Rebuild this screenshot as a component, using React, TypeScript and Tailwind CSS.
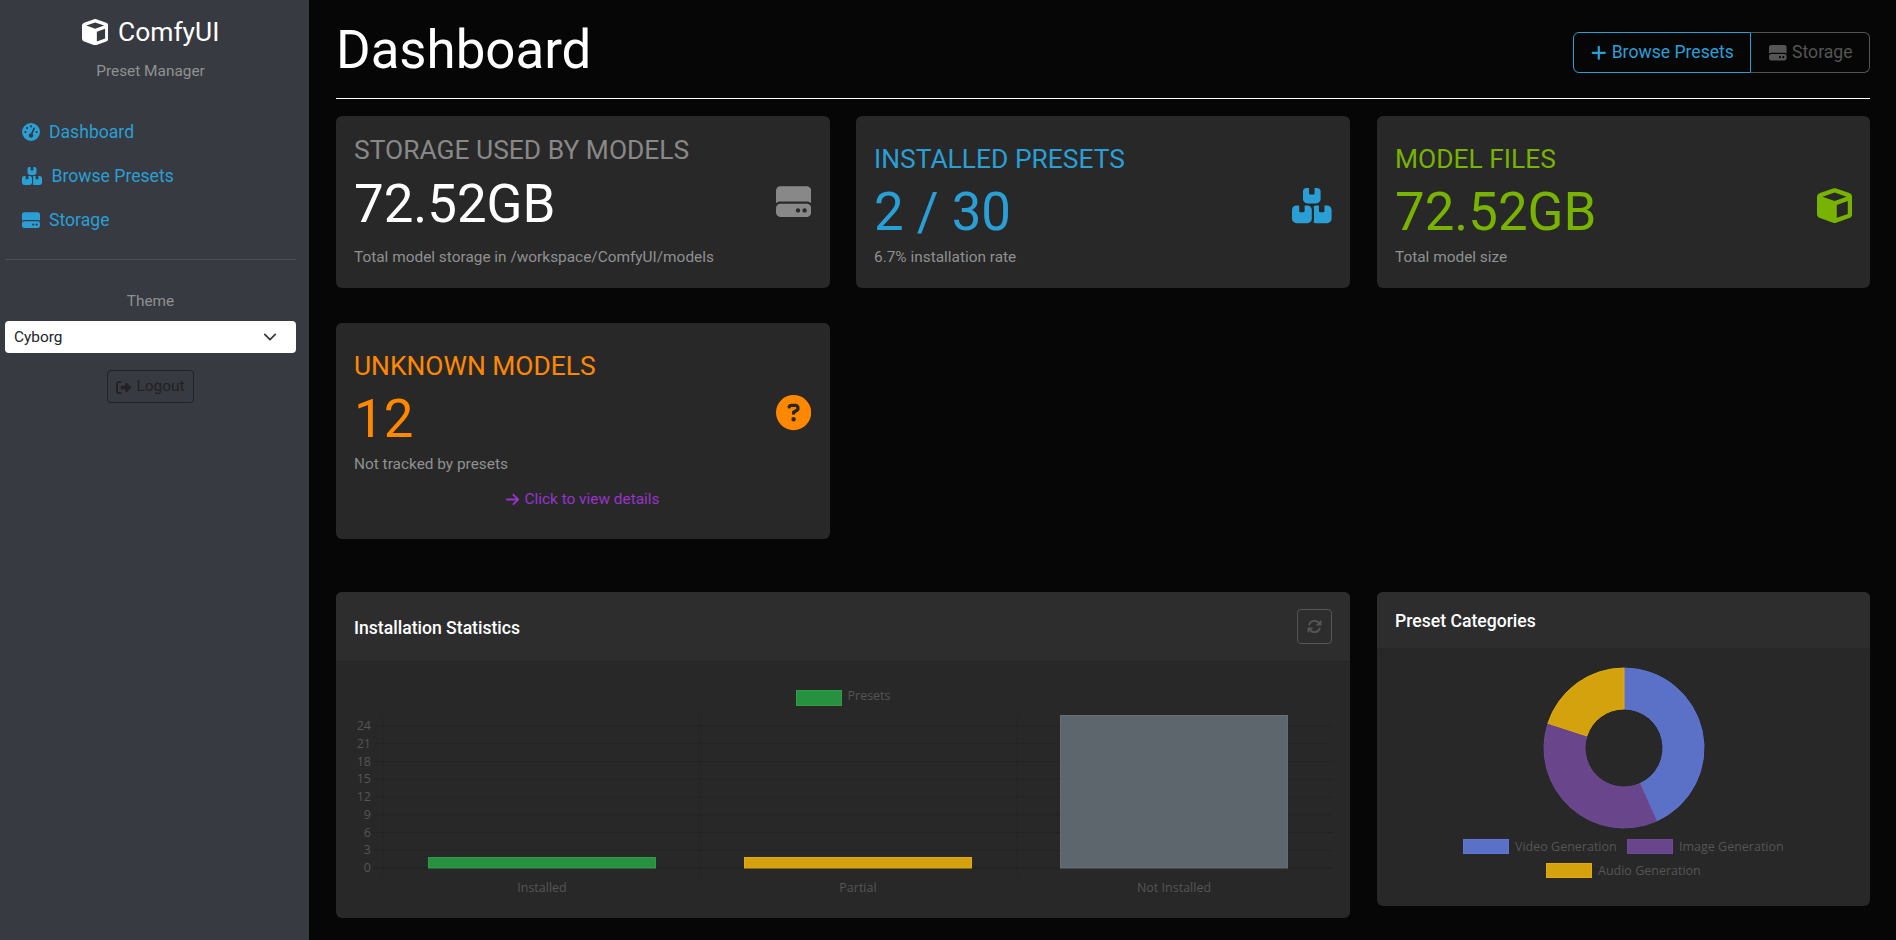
import type { ReactNode } from 'react';
import {
  FaArrowRight,
  FaArrowsRotate,
  FaBoxesStacked,
  FaCircleQuestion,
  FaCube,
  FaGaugeHigh,
  FaHardDrive,
  FaPlus,
  FaRightFromBracket,
} from 'react-icons/fa6';

const chartFont = { fontFamily: '"Open Sans", sans-serif' };

function Sidebar() {
  return (
    <aside className="w-[309px] shrink-0 bg-[#373a40] pl-[5px] pr-[13px] min-h-screen">
      <div className="flex items-center justify-center gap-[10px] pt-[16px] h-[48px] text-white">
        <FaCube className="text-[26.4px]" />
        <span className="text-[26.4px] leading-none">ComfyUI</span>
      </div>
      <p className="mt-[14px] text-center text-[15.4px] leading-[18px] text-[#8f9192]">Preset Manager</p>
      <nav className="mt-[40px] pl-[17px] flex flex-col gap-[20px] text-[#2a9fd6] text-[17.6px] leading-[24px]">
        <a className="flex items-center gap-[9px]">
          <FaGaugeHigh className="text-[18px]" />
          Dashboard
        </a>
        <a className="flex items-center gap-[9.5px]">
          <FaBoxesStacked className="w-[20px] h-[18px]" />
          Browse Presets
        </a>
        <a className="flex items-center gap-[9px]">
          <FaHardDrive className="text-[18px]" />
          Storage
        </a>
      </nav>
      <hr className="mt-[27px] border-[#4b4e54]" />
      <p className="mt-[32px] text-center text-[15.4px] leading-[18px] text-[#8f9192]">Theme</p>
      <div className="mt-[11px] h-[32px] bg-white rounded-[4px] flex items-center justify-between pl-[9px] pr-[19px] text-[15.4px] text-[#212529]">
        <span className="mt-[1px]">Cyborg</span>
        <svg viewBox="0 0 16 16" className="w-[14px] h-[14px]" fill="none" stroke="#343a40" strokeWidth="2" strokeLinecap="round" strokeLinejoin="round">
          <path d="m2 5 6 6 6-6" />
        </svg>
      </div>
      <div className="mt-[17px] flex justify-center">
        <button className="w-[87px] h-[33px] pt-[1px] rounded-[4px] border border-[#222] text-[#222] text-[15.4px] flex items-center justify-center gap-[5px]">
          <FaRightFromBracket className="text-[15px]" />
          Logout
        </button>
      </div>
    </aside>
  );
}

type StatProps = {
  title: string;
  value: string;
  note: string;
  icon: ReactNode;
  tone: string;
  valueTone: string;
  compact?: boolean;
  className?: string;
  children?: ReactNode;
};

function StatCard({ title, value, note, icon, tone, valueTone, compact, className, children }: StatProps) {
  return (
    <div className={`bg-[#282828] rounded-[6px] pl-[18px] ${compact ? 'pt-[18px]' : 'pt-[27px]'} ${className ?? 'pr-[19px]'}`}>
      <div className="flex items-center justify-between">
        <div>
          <h3 className={`text-[26.4px] leading-[32px] ${tone}`}>{title}</h3>
          <div className={`${compact ? 'mt-[7px]' : 'mt-[6px]'} text-[52.8px] leading-[63px] ${valueTone}`}>{value}</div>
          <p className={`${compact ? 'mt-[10px]' : 'mt-[2px]'} text-[15.4px] leading-[23px] text-[#8f9192]`}>{note}</p>
        </div>
        {icon}
      </div>
      {children}
    </div>
  );
}

function BarChart() {
  const ticks = [24, 21, 18, 15, 12, 9, 6, 3, 0];
  return (
    <svg viewBox="336 662 1014 256" className="block w-[1014px] h-[256px]" style={chartFont}>
      <rect x="796.5" y="690.5" width="45" height="15" fill="#28913f" stroke="#2f9e47" />
      <text x="847.5" y="700" fontSize="12.5" fill="#555">Presets</text>
      {ticks.map((t, i) => {
        const y = 726 + i * 17.75;
        return (
          <g key={t}>
            <line x1="374" x2="1332" y1={y} y2={y} stroke={t === 0 ? '#1f1f1f' : '#232323'} />
            <text x="371" y={y + 4} fontSize="12.5" fill="#555" textAnchor="end">{t}</text>
          </g>
        );
      })}
      {[383, 700, 1017].map((x) => (
        <line key={x} x1={x} x2={x} y1="715" y2="877" stroke="#242424" />
      ))}
      <rect x="428.5" y="857.5" width="227" height="10.5" fill="#28913f" stroke="#2f9e47" />
      <rect x="744.5" y="857.5" width="227" height="10.5" fill="#d4a20d" stroke="#e0ab0e" />
      <rect x="1060.5" y="715.5" width="227" height="152.5" fill="#5e666d" stroke="#666e75" />
      <text x="542" y="892" fontSize="12.5" fill="#555" textAnchor="middle">Installed</text>
      <text x="858" y="892" fontSize="12.5" fill="#555" textAnchor="middle">Partial</text>
      <text x="1174" y="892" fontSize="12.5" fill="#555" textAnchor="middle">Not Installed</text>
    </svg>
  );
}

// polar to cartesian for the doughnut, 0deg at the top
function pt(r: number, deg: number) {
  const a = (deg * Math.PI) / 180;
  return `${(1624 + r * Math.sin(a)).toFixed(2)} ${(748 - r * Math.cos(a)).toFixed(2)}`;
}

function slice(from: number, to: number) {
  const big = to - from > 180 ? 1 : 0;
  return `M${pt(80, from)} A80 80 0 ${big} 1 ${pt(80, to)} L${pt(39, to)} A39 39 0 ${big} 0 ${pt(39, from)} Z`;
}

function DoughnutChart() {
  return (
    <svg viewBox="1377 649 493 257" className="block w-[493px] h-[257px]" style={chartFont}>
      <path d={slice(0, 156)} fill="#5b70c7" stroke="#5f75d0" />
      <path d={slice(156, 288)} fill="#69458c" stroke="#6f4993" />
      <path d={slice(288, 360)} fill="#d4a20d" stroke="#e0ab0e" />
      <rect x="1463.5" y="839.5" width="45" height="14" fill="#5b70c7" stroke="#5f75d0" />
      <text x="1515" y="851" fontSize="12.5" fill="#555">Video Generation</text>
      <rect x="1627.5" y="839.5" width="45" height="14" fill="#69458c" stroke="#6f4993" />
      <text x="1679" y="851" fontSize="12.5" fill="#555">Image Generation</text>
      <rect x="1546.5" y="863.5" width="45" height="14" fill="#d4a20d" stroke="#e0ab0e" />
      <text x="1598" y="875" fontSize="12.5" fill="#555">Audio Generation</text>
    </svg>
  );
}

export default function App() {
  return (
    <div className="flex min-h-screen h-[940px] overflow-hidden bg-[#060606]" style={{ fontFamily: 'Roboto, sans-serif' }}>
      <Sidebar />
      <main className="flex-1 pl-[27px] pr-[26px]">
        <header className="h-[99px] flex items-center justify-between border-b border-white">
          <h1 className="text-[52.8px] leading-none text-white mt-[2px]">Dashboard</h1>
          <div className="flex mt-[7px] text-[17.6px]">
            <button className="w-[178px] h-[41px] rounded-l-[6px] border border-[#2a9fd6] text-[#2a9fd6] flex items-center justify-center gap-[4px]">
              <FaPlus className="text-[17.6px]" />
              Browse Presets
            </button>
            <button className="w-[119px] h-[41px] pl-[2px] rounded-r-[6px] border border-l-0 border-[#555] text-[#555] flex items-center justify-center gap-[5px]">
              <FaHardDrive className="text-[17.6px]" />
              Storage
            </button>
          </div>
        </header>

        <section className="mt-[17px] grid grid-cols-[494px_494px_494px] gap-x-[26px] gap-y-[35px] auto-rows-min">
          <div className="h-[172px] grid">
            <StatCard
              compact
              title="STORAGE USED BY MODELS"
              value="72.52GB"
              note="Total model storage in /workspace/ComfyUI/models"
              tone="text-[#888]"
              valueTone="text-white"
              icon={<FaHardDrive className="text-[35.2px] text-[#888]" />}
            />
          </div>
          <StatCard
            className="pr-[18px]"
            title="INSTALLED PRESETS"
            value="2 / 30"
            note="6.7% installation rate"
            tone="text-[#2a9fd6]"
            valueTone="text-[#2a9fd6]"
            icon={<FaBoxesStacked className="w-[39.6px] h-[35.2px] text-[#2a9fd6]" />}
          />
          <StatCard
            className="ml-[1px] pr-[18px]"
            title="MODEL FILES"
            value="72.52GB"
            note="Total model size"
            tone="text-[#77b300]"
            valueTone="text-[#77b300]"
            icon={<FaCube className="text-[35.2px] text-[#77b300]" />}
          />
          <div className="h-[216px] grid">
            <StatCard
              title="UNKNOWN MODELS"
              value="12"
              note="Not tracked by presets"
              tone="text-[#ff8800]"
              valueTone="text-[#ff8800]"
              icon={<FaCircleQuestion className="text-[35.2px] text-[#ff8800]" />}
            >
              <a className="mt-[12px] flex items-center justify-center gap-[4px] text-[15.4px] leading-[23px] text-[#9933cc]">
                <FaArrowRight className="text-[15px]" />
                Click to view details
              </a>
            </StatCard>
          </div>
        </section>

        <section className="mt-[53px] grid grid-cols-[494px_494px_494px] gap-x-[26px] items-start">
          <div className="col-span-2 bg-[#282828] rounded-[6px] overflow-hidden">
            <div className="h-[70px] bg-[#2d2d2d] border-b border-[#262626] flex items-center justify-between pl-[18px] pr-[18px]">
              <h5 className="mt-[4px] text-[17.6px] font-medium text-white">Installation Statistics</h5>
              <button className="w-[35px] h-[35px] rounded-[4px] border border-[#555] text-[#555] flex items-center justify-center">
                <FaArrowsRotate className="text-[15px]" />
              </button>
            </div>
            <BarChart />
          </div>
          <div className="ml-[1px] bg-[#282828] rounded-[6px] overflow-hidden">
            <div className="h-[57px] bg-[#2d2d2d] border-b border-[#262626] flex items-center pl-[18px]">
              <h5 className="mt-[3px] text-[17.6px] font-medium text-white">Preset Categories</h5>
            </div>
            <DoughnutChart />
          </div>
        </section>
      </main>
    </div>
  );
}
